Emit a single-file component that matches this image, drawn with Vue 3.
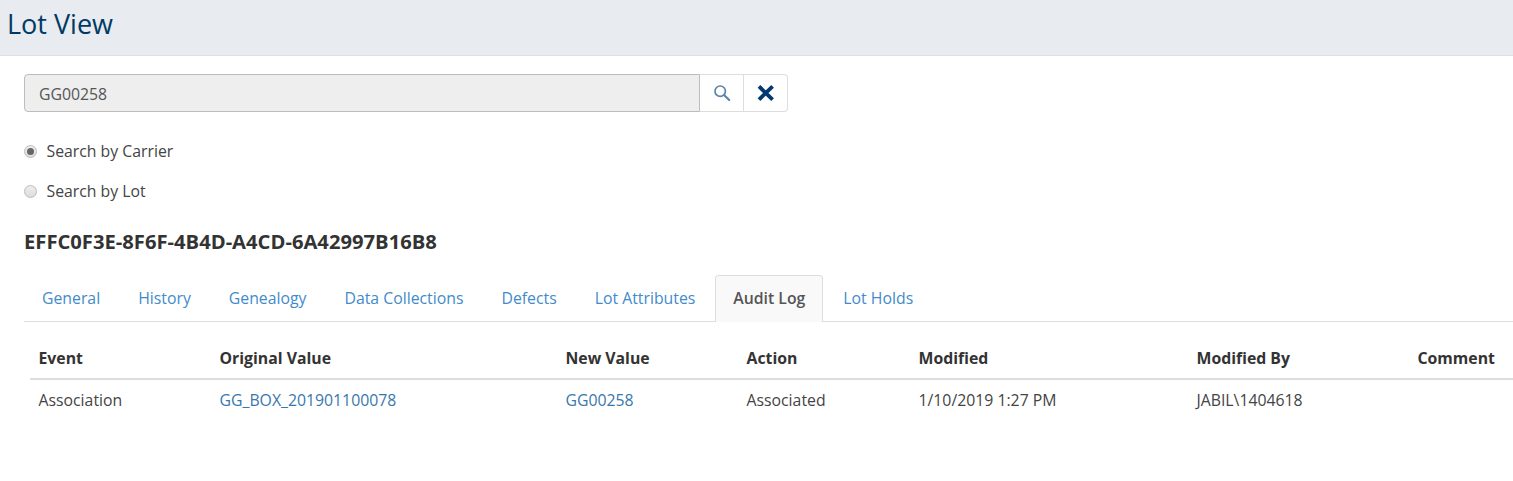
<template>
  <div class="page">
    <header class="page-header">
      <h1>Lot View</h1>
    </header>

    <main class="content">
      <div class="search-group">
        <input class="search-input" type="text" value="GG00258" readonly />
        <button class="icon-btn" type="button" aria-label="Search">
          <svg width="18" height="18" viewBox="0 0 18 18" fill="none" stroke="#5b84ad" stroke-width="1.7">
            <circle cx="7.2" cy="7.2" r="5.2" />
            <path d="M11 11l5.2 5" stroke-linecap="round" stroke-width="2.2" />
          </svg>
        </button>
        <button class="icon-btn last" type="button" aria-label="Clear">
          <svg width="18" height="18" viewBox="0 0 18 18" fill="none" stroke="#003a70" stroke-width="3.8">
            <path d="M2 2.400l13.600 13.200M15.600 2.400L2 15.600" />
          </svg>
        </button>
      </div>

      <div class="radios">
        <label class="radio" v-for="opt in options" :key="opt.label">
          <span class="dot" :class="{ on: opt.checked }"></span>
          {{ opt.label }}
        </label>
      </div>

      <h2 class="lot-id">EFFC0F3E-8F6F-4B4D-A4CD-6A42997B16B8</h2>

      <ul class="tabs">
        <li v-for="tab in tabs" :key="tab" class="tab" :class="{ active: tab === 'Audit Log' }">{{ tab }}</li>
      </ul>

      <div class="table-wrap">
        <table class="log">
          <thead>
            <tr>
              <th v-for="col in columns" :key="col.name" :style="{ width: col.width + 'px' }">{{ col.name }}</th>
            </tr>
          </thead>
          <tbody>
            <tr>
              <td>Association</td>
              <td><a href="#">GG_BOX_201901100078</a></td>
              <td><a href="#">GG00258</a></td>
              <td>Associated</td>
              <td>1/10/2019 1:27 PM</td>
              <td>JABIL\1404618</td>
              <td></td>
            </tr>
          </tbody>
        </table>
      </div>
    </main>
  </div>
</template>

<script setup>
const options = [
  { label: 'Search by Carrier', checked: true },
  { label: 'Search by Lot', checked: false },
]

const tabs = ['General', 'History', 'Genealogy', 'Data Collections', 'Defects', 'Lot Attributes', 'Audit Log', 'Lot Holds']

const columns = [
  { name: 'Event', width: 181 },
  { name: 'Original Value', width: 346 },
  { name: 'New Value', width: 181 },
  { name: 'Action', width: 172 },
  { name: 'Modified', width: 278 },
  { name: 'Modified By', width: 221 },
  { name: 'Comment', width: 104 },
]
</script>

<style>
html,
body {
  margin: 0;
  background: #fff;
}
</style>

<style scoped>
.page {
  width: 1513px;
  height: 481px;
  overflow: hidden;
  font-family: "Open Sans", sans-serif;
  font-size: 15.8px;
  color: #333;
}

.page-header {
  height: 56px;
  box-sizing: border-box;
  background: #e8ebf0;
  border-bottom: 1px solid #dcdfe3;
  padding-left: 7px;
}

.page-header h1 {
  margin: 0;
  font-size: 27px;
  font-weight: 400;
  line-height: 47px;
  color: #003a63;
}

.content {
  padding: 18px 0 0 24px;
}

.search-group {
  display: flex;
  width: 764px;
  height: 38px;
}

.search-input {
  flex: 1;
  min-width: 0;
  box-sizing: border-box;
  padding: 2px 14px 0;
  border: 1px solid #bdbdbd;
  border-radius: 4px 0 0 4px;
  background: #eee;
  font: inherit;
  color: #555;
  outline: none;
}

.icon-btn {
  width: 44px;
  box-sizing: border-box;
  display: flex;
  align-items: center;
  justify-content: center;
  padding: 0;
  background: #fff;
  border: 1px solid #ddd;
  border-left: 0;
}

.icon-btn.last {
  border-radius: 0 4px 4px 0;
}

.radios {
  display: flex;
  flex-direction: column;
  gap: 20px;
  margin-top: 29px;
}

.radio {
  display: flex;
  align-items: center;
  gap: 9.500px;
  height: 20px;
  color: #444;
}

.dot {
  width: 13px;
  height: 13px;
  box-sizing: border-box;
  border: 1px solid #bbb;
  border-radius: 50%;
  background: linear-gradient(#eee, #ddd);
  position: relative;
}

.dot.on::after {
  content: "";
  position: absolute;
  top: 2px;
  left: 2px;
  width: 7px;
  height: 7px;
  border-radius: 50%;
  background: #666;
}

.lot-id {
  margin: 28px 0 0;
  font-size: 20.2px;
  line-height: 25px;
  font-weight: 700;
  color: #333;
}

.tabs {
  display: flex;
  list-style: none;
  margin: 21px 0 0;
  padding: 0;
  height: 47px;
  box-sizing: border-box;
  border-bottom: 1px solid #ddd;
}

.tab {
  padding: 0 18px;
  margin-right: 2px;
  line-height: 46px;
  color: #428bca;
}

.tab.active {
  height: 47px;
  box-sizing: border-box;
  padding: 0 17px;
  color: #555;
  background: #f9f9f9;
  border: 1px solid #ddd;
  border-bottom: 0;
  border-radius: 4px 4px 0 0;
  font-weight: 600;
  line-height: 44px;
}

.table-wrap {
  margin: 16px 0 0 6px;
}

.log {
  border-collapse: collapse;
  table-layout: fixed;
  width: 1483px;
}

.log th {
  height: 41px;
  padding: 0 8.500px;
  box-sizing: border-box;
  text-align: left;
  font-weight: 700;
  color: #333;
  border-bottom: 2px solid #ddd;
}

.log td {
  height: 40px;
  padding: 0 8.500px;
  box-sizing: border-box;
  color: #444;
}

.log a {
  color: #3a77ad;
  text-decoration: none;
}
</style>
